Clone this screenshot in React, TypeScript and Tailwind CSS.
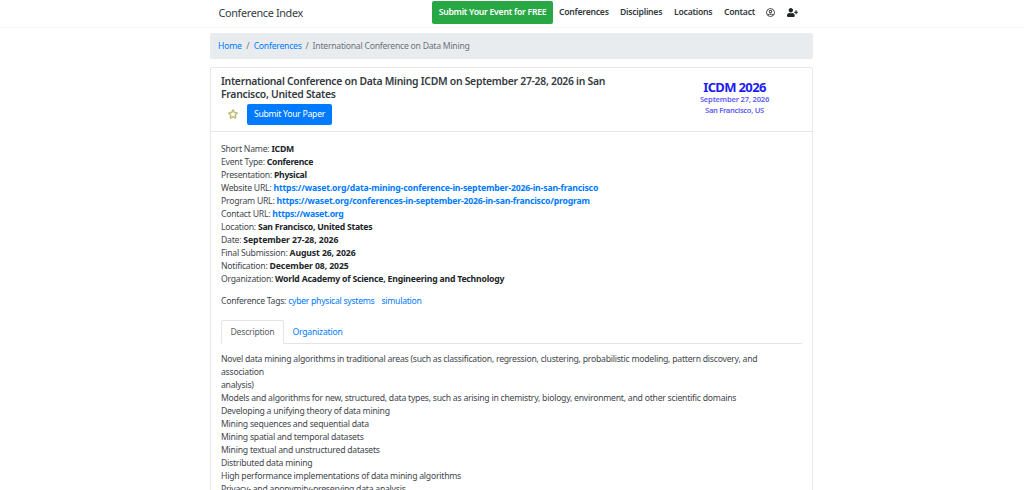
import React from "react";
import { FaRegStar, FaRegUserCircle, FaUserPlus } from "react-icons/fa";

type TDetail = { label: string; value: string; isLink?: boolean; className: string };

const navLinks = [
  { name: "Conferences", className: "w-[61px]" },
  { name: "Disciplines", className: "w-[54px]" },
  { name: "Locations", className: "w-[50px]" },
  { name: "Contact", className: "w-[42px]" },
];

const details: TDetail[] = [
  { label: "Short Name:", value: "ICDM", className: "tracking-[-0.2px]" },
  { label: "Event Type:", value: "Conference", className: "tracking-[-0.3px]" },
  { label: "Presentation:", value: "Physical", className: "tracking-[-0.3px]" },
  {
    label: "Website URL:",
    value: "https://waset.org/data-mining-conference-in-september-2026-in-san-francisco",
    isLink: true,
    className: "tracking-[-0.16px]",
  },
  {
    label: "Program URL:",
    value: "https://waset.org/conferences-in-september-2026-in-san-francisco/program",
    isLink: true,
    className: "tracking-[-0.185px]",
  },
  { label: "Contact URL:", value: "https://waset.org", isLink: true, className: "tracking-[-0.25px]" },
  { label: "Location:", value: "San Francisco, United States", className: "tracking-[-0.25px]" },
  { label: "Date:", value: "September 27-28, 2026", className: "tracking-[-0.08px]" },
  { label: "Final Submission:", value: "August 26, 2026", className: "tracking-[-0.1px]" },
  { label: "Notification:", value: "December 08, 2025", className: "tracking-[-0.1px]" },
  {
    label: "Organization:",
    value: "World Academy of Science, Engineering and Technology",
    className: "tracking-[-0.2px]",
  },
];

const topics = [
  "Novel data mining algorithms in traditional areas (such as classification, regression, clustering, probabilistic modeling, pattern discovery, and",
  "association",
  "analysis)",
  "Models and algorithms for new, structured, data types, such as arising in chemistry, biology, environment, and other scientific domains",
  "Developing a unifying theory of data mining",
  "Mining sequences and sequential data",
  "Mining spatial and temporal datasets",
  "Mining textual and unstructured datasets",
  "Distributed data mining",
  "High performance implementations of data mining algorithms",
  "Privacy- and anonymity-preserving data analysis",
];

function Navbar() {
  return (
    <nav className="h-7 border-b border-[#f3f4f5]">
      <div className="mx-auto flex h-[26px] w-[603px] items-center pl-2">
        <a className="w-[213.5px] pb-0.5 text-[10.8px] tracking-[-0.32px] text-[#343a40]">Conference Index</a>
        <a className="mt-[-2px] flex h-[23px] w-[121px] items-center justify-center rounded-[2px] bg-[#28a745] text-[8.67px] font-semibold tracking-[-0.25px] text-white">
          Submit Your Event for FREE
        </a>
        <div className="mt-[-2px] ml-1.5 flex items-center text-[8.67px] font-semibold tracking-[-0.26px] text-[#343a40]">
          {navLinks.map((link) => (
            <a key={link.name} className={link.className}>
              {link.name}
            </a>
          ))}
          <FaRegUserCircle className="h-[9px] w-[9px] shrink-0" />
          <FaUserPlus className="ml-3 h-[9px] w-[11px] shrink-0 text-[#212529]" />
        </div>
      </div>
    </nav>
  );
}

export default function App() {
  return (
    <div className="h-[490px] overflow-hidden bg-white font-['Noto_Sans','Open_Sans',sans-serif] text-[8.67px] leading-[13px] whitespace-nowrap text-[#43484d]">
      <Navbar />
      <main className="ml-[210px] w-[603px]">
        {/* Breadcrumb */}
        <div className="mt-[5px] flex h-[26px] items-center gap-1 rounded-[2px] bg-[#e9ecef] pl-2 tracking-[-0.25px] text-[#6c757d]">
          <a className="text-[#007bff]">Home</a>
          <span className="ml-[0.5px]">/</span>
          <a className="ml-[0.5px] text-[#007bff]">Conferences</a>
          <span>/</span>
          <span>International Conference on Data Mining</span>
        </div>

        <div className="mt-2 h-[500px] rounded-t-[2px] border border-[#e6e7e8]">
          {/* Card header */}
          <div className="flex h-16 border-b border-[#e6e7e8] pl-2.5">
            <div className="w-[448px] pt-[7px]">
              <h1 className="text-[10.4px] leading-[12.5px] font-semibold tracking-[-0.28px] text-[#343a40]">
                International Conference on Data Mining ICDM on September 27-28, 2026 in San
                <br />
                Francisco, United States
              </h1>
              <div className="mt-1 flex">
                <button className="flex h-[21px] w-[26px] items-center justify-center text-[#bdb76b]">
                  <FaRegStar className="mt-[-1px] ml-[-2px] h-[10px] w-[10px] stroke-[#bdb76b] [stroke-width:35]" />
                </button>
                <button className="h-[21px] w-[85px] rounded-[2px] bg-[#007bff] tracking-[-0.28px] text-white">
                  Submit Your Paper
                </button>
              </div>
            </div>
            <div className="w-[131px] pt-3 text-center text-[#5c5cf5]">
              <div className="text-[13px] leading-[14px] font-bold tracking-[-0.65px] text-[#2020f0]">ICDM 2026</div>
              <div className="text-[7.6px] leading-[11px] font-semibold tracking-[-0.2px]">September 27, 2026</div>
              <div className="text-[7.6px] leading-[11px] font-semibold tracking-[-0.3px]">San Francisco, US</div>
            </div>
          </div>

          {/* Card body */}
          <div className="px-2.5 pt-[11px]">
            {details.map((item) => (
              <div key={item.label} className="flex gap-0.5">
                <span className="tracking-[-0.24px]">{item.label}</span>
                <b className={`${item.className} ${item.isLink ? "text-[#007bff]" : "text-[#212529]"}`}>
                  {item.value}
                </b>
              </div>
            ))}
            <div className="mt-[9px] flex tracking-[-0.28px]">
              <span className="mr-0.5">Conference Tags:</span>
              <a className="mr-[7px] text-[#007bff]">cyber physical systems</a>
              <a className="text-[#007bff]">simulation</a>
            </div>

            <div className="mt-3 flex h-6 border-b border-[#e2e5e8] tracking-[-0.24px]">
              <div className="h-6 w-[63px] rounded-t-[2px] border border-b-white border-[#e2e5e8] pt-[5px] text-center text-[#5a6268]">
                Description
              </div>
              <a className="w-[67px] pt-1.5 text-center text-[#007bff]">Organization</a>
            </div>

            <div className="pt-[9px] tracking-[-0.242px]">
              {topics.map((topic) => (
                <div key={topic}>{topic}</div>
              ))}
            </div>
          </div>
        </div>
      </main>
    </div>
  );
}
